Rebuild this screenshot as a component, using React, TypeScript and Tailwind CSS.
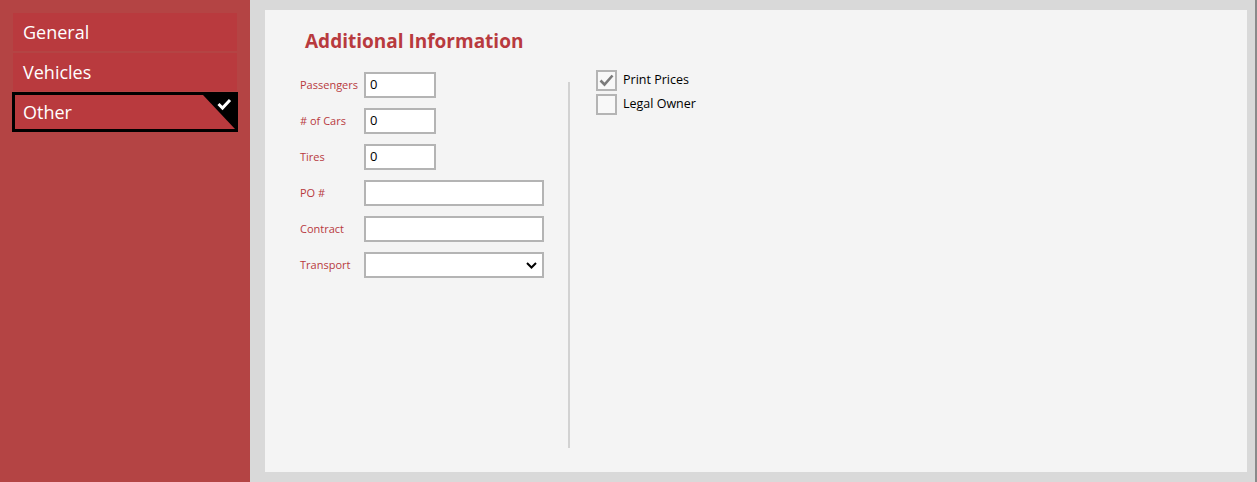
// App.tsx
// Additional info form with side nav

const navItems = ['General', 'Vehicles', 'Other']

function NumberRow({ label, value, wide }: { label: string; value?: string; wide?: boolean }) {
  return (
    <div className="flex items-center h-[26px]">
      <span className="w-[64px] text-[11px] text-[#b83a3e]">{label}</span>
      <div
        className={`h-[26px] ${wide ? 'w-[180px]' : 'w-[72px]'} border-2 border-[#b4b4b4] bg-white flex items-center px-[4px] text-[13px] text-black`}
      >
        {value}
      </div>
    </div>
  )
}

function CheckRow({ label, checked }: { label: string; checked?: boolean }) {
  return (
    <div className="flex items-center h-[21px] gap-[6px]">
      <div className="w-[21px] h-[21px] border-2 border-[#b4b4b4] bg-[#f8f8f8] flex items-center justify-center">
        {checked && (
          <svg width="15" height="13" viewBox="0 0 15 13">
            <path d="M1.5 6.5 L5.5 10.5 L13.5 1.5" fill="none" stroke="#7a7a7a" strokeWidth="2.6" />
          </svg>
        )}
      </div>
      <span className="text-[12.5px] text-black">{label}</span>
    </div>
  )
}

export default function App() {
  return (
    <div className="flex w-[1257px] h-[482px] bg-[#d9d9d9] font-['Open_Sans',sans-serif] overflow-hidden">
      <aside className="w-[250px] shrink-0 bg-[#b44444] pt-[13px] px-[13px] flex flex-col gap-[2px]">
        {navItems.map((item) => {
          const active = item === 'Other'
          return (
            <div
              key={item}
              className={`relative h-[38px] w-[224px] bg-[#b93a3e] flex items-center pl-[10px] text-[18px] text-white ${
                active ? 'outline-[3px] outline-solid outline-black -outline-offset-2' : ''
              }`}
            >
              {item}
              {active && (
                <svg className="absolute right-[2px] top-[2px]" width="32" height="34" viewBox="0 0 32 34">
                  <polygon points="0,0 32,0 32,34" fill="black" />
                  <path d="M15.5 9 L19.5 13 L27 5" fill="none" stroke="white" strokeWidth="3" />
                </svg>
              )}
            </div>
          )
        })}
      </aside>

      <main className="flex-1 pt-[10px] pb-[10px] pl-[15px] pr-[8px] border-r-2 border-[#8a8a8a] flex">
        <div className="flex-1 bg-[#f4f4f4] flex flex-col">
          <h1 className="mt-[17px] ml-[40px] text-[19px] font-bold text-[#b83a3e] leading-[28px]">
            Additional Information
          </h1>
          <div className="flex mt-[10px] ml-[35px]">
            <div className="flex flex-col gap-[10px] pt-[7px]">
              <NumberRow label="Passengers" value="0" />
              <NumberRow label="# of Cars" value="0" />
              <NumberRow label="Tires" value="0" />
              <NumberRow label="PO #" wide />
              <NumberRow label="Contract" wide />
              <div className="flex items-center h-[26px]">
                <span className="w-[64px] text-[11px] text-[#b83a3e]">Transport</span>
                <div className="h-[26px] w-[180px] border-2 border-[#b4b4b4] bg-white flex items-center justify-end pr-[5px]">
                  <svg width="11" height="7" viewBox="0 0 11 7">
                    <path d="M1 1 L5.5 5.5 L10 1" fill="none" stroke="black" strokeWidth="2" />
                  </svg>
                </div>
              </div>
            </div>
            <div className="ml-[24px] mt-[17px] w-[2px] h-[366px] bg-[#d2d2d2]" />
            <div className="ml-[26px] flex flex-col gap-[3px] pt-[5px]">
              <CheckRow label="Print Prices" checked />
              <CheckRow label="Legal Owner" />
            </div>
          </div>
        </div>
      </main>
    </div>
  )
}
